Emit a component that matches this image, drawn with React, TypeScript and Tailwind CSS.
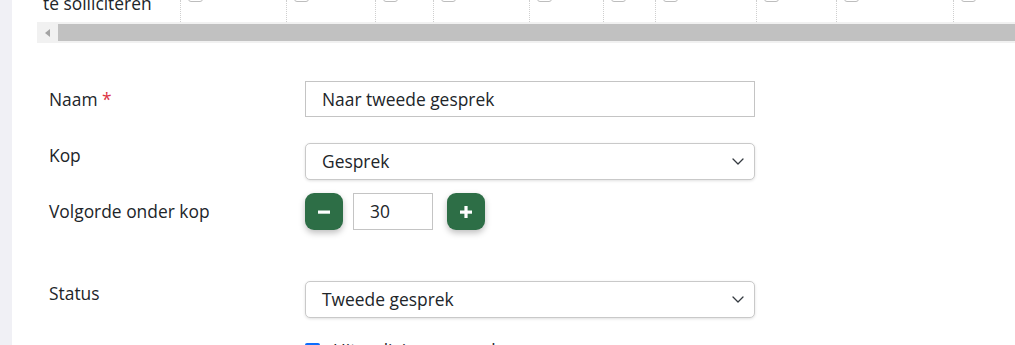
import React from "react";

const columnEdges = [180, 286, 375, 433, 529, 603, 655, 756, 836, 953, 1015];

const Chevron = () => (
  <svg width="12" height="7" viewBox="0 0 12 7" fill="none" className="text-[#343a40]">
    <path d="M1 1l5 5 5-5" stroke="currentColor" strokeWidth="1.3" strokeLinecap="round" strokeLinejoin="round" />
  </svg>
);

const StepButton = ({ plus, className }: { plus?: boolean; className?: string }) => (
  <button
    type="button"
    className={`w-[38px] h-[37px] rounded-[9px] bg-[#2d6e46] shadow-[0_3px_6px_rgba(0,0,0,0.25)] flex items-center justify-center ${className || ""}`}
  >
    <svg width="14" height="14" viewBox="0 0 14 14">
      <rect x="1" y="5.5" width="12" height="3.2" fill="#fff" />
      {plus && <rect x="5.4" y="1" width="3.2" height="12" fill="#fff" />}
    </svg>
  </button>
);

const Select = ({ value }: { value: string }) => (
  <div className="w-[450px] h-[37px] border border-[#c9c9c9] rounded-[5px] bg-white shadow-[0_1px_3px_rgba(0,0,0,0.12)] flex items-center justify-between pl-4 pr-[10px] text-[17.4px] text-[#212529]">
    <span>{value}</span>
    <Chevron />
  </div>
);

const Label = ({ children, className }: { children?: React.ReactNode; className?: string }) => (
  <div className={`w-[256px] shrink-0 text-[17.4px] leading-6 text-[#212529] ${className || ""}`}>{children}</div>
);

export default function App() {
  let prev = 37;
  const cells = columnEdges.map((edge, i) => {
    const w = edge - prev;
    prev = edge;
    return { w, i };
  });

  return (
    <div
      className="w-[1015px] h-[345px] overflow-hidden flex bg-white"
      style={{ fontFamily: '"Open Sans", "Noto Sans", sans-serif' }}
    >
      <div className="w-3 shrink-0 bg-[#f0f0f5]" />
      <div className="flex-1 flex flex-col pl-[25px]">
        <div className="flex h-[22px] shrink-0 overflow-hidden">
          {cells.map(({ w, i }) =>
            i === 0 ? (
              <div key={i} style={{ width: w }} className="shrink-0 pl-1.5">
                <div className="-mt-[9px] text-[17.4px] leading-6 text-[#212529]">te solliciteren</div>
              </div>
            ) : (
              <div
                key={i}
                style={{ width: w }}
                className="shrink-0 border-l border-dotted border-[#cfcfcf] pl-[7px]"
              >
                <div className="-mt-[12px] w-[15px] h-[14px] rounded-[3px] border border-[#bdbdbd] bg-white" />
              </div>
            )
          )}
        </div>
        <div className="h-[21px] shrink-0 bg-[#f1f1f1] flex items-center pl-[8px]">
          <svg width="6" height="8" viewBox="0 0 6 8" className="mr-[7px]">
            <path d="M5 0v8L0 4z" fill="#a3a3a3" />
          </svg>
          <div className="flex-1 h-[17px] bg-[#c1c1c1]" />
        </div>

        <div className="flex flex-col shrink-0 pl-3 text-[#212529]">
          <div className="flex mt-[38px]">
            <Label className="pt-[6px]">
              Naam <span className="text-[#dc3545]">*</span>
            </Label>
            <div className="w-[450px] h-[36px] border border-[#c4c4c4] flex items-center pl-4 text-[17.4px]">
              Naar tweede gesprek
            </div>
          </div>

          <div className="flex mt-[26px]">
            <Label>Kop</Label>
            <Select value="Gesprek" />
          </div>

          <div className="flex mt-[13px]">
            <Label className="pt-[6px]">Volgorde onder kop</Label>
            <div className="flex items-center gap-[10px]">
              <StepButton />
              <div className="w-[80px] h-[37px] border border-[#c4c4c4] flex items-center pl-4 text-[17.4px]">30</div>
              <StepButton plus className="ml-1" />
            </div>
          </div>

          <div className="flex mt-[51px]">
            <Label>Status</Label>
            <Select value="Tweede gesprek" />
          </div>

          <div className="flex mt-[20px]">
            <Label />
            <div className="flex items-center gap-[13px] text-[17.4px] leading-6">
              <input type="checkbox" defaultChecked className="w-[15px] h-[15px] accent-[#0d6efd]" />
              <span>Uitnodiging verzenden</span>
            </div>
          </div>
        </div>
      </div>
    </div>
  );
}
